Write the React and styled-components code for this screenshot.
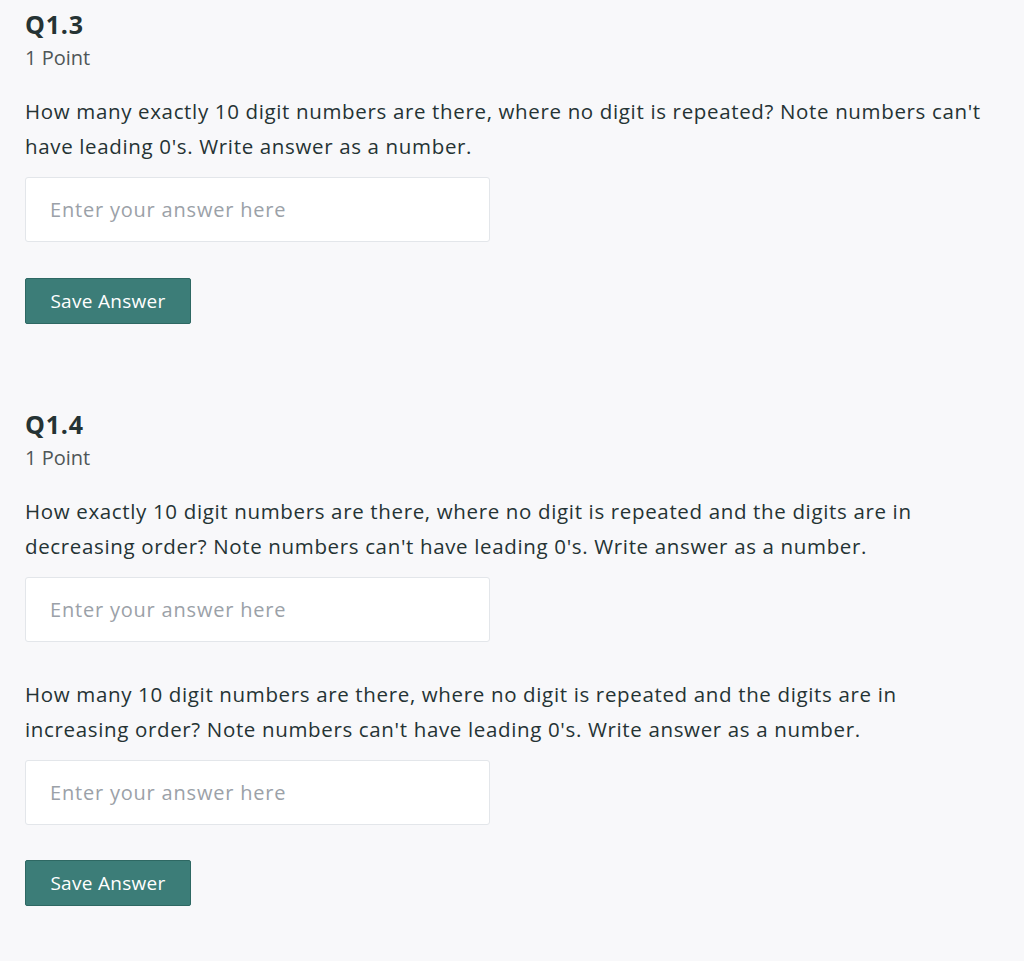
import React from "react";
import styled, { createGlobalStyle } from "styled-components";

const Global = createGlobalStyle`
  html, body { margin: 0; padding: 0; background: #f8f8fa; }
  body { font-family: "Open Sans", "Noto Sans", sans-serif; color: #253334; }
`;

const Page = styled.main`
  padding: 7px 25px 40px 25px;
  display: flex;
  flex-direction: column;
`;

const Question = styled.section`
  display: flex;
  flex-direction: column;
  margin-bottom: ${(p) => p.$gap || 0}px;
`;

const Title = styled.h2`
  margin: 0;
  font-size: 25px;
  font-weight: 700;
  line-height: 34px;
  letter-spacing: 0.8px;
  color: #253334;
`;

const Points = styled.div`
  font-size: 20px;
  line-height: 34px;
  color: #4f5657;
  margin-bottom: 19px;
`;

const Prompt = styled.p`
  margin: 0 0 13px 0;
  font-size: 20.5px;
  line-height: 35px;
  letter-spacing: 0.65px;
  max-width: 960px;
`;

const Input = styled.input`
  box-sizing: border-box;
  width: 465px;
  height: 65px;
  padding: 0 24px;
  border: 1px solid #e3e6ea;
  border-radius: 3px;
  background: #fff;
  font-family: inherit;
  font-size: 20px;
  letter-spacing: 0.8px;
  color: #253334;
  margin-bottom: ${(p) => p.$mb}px;
  &::placeholder { color: #9ba1a8; }
  &:focus { outline: none; }
`;

const Button = styled.button`
  align-self: flex-start;
  box-sizing: border-box;
  width: 166px;
  height: 46px;
  padding: 0;
  background: #3c7d78;
  border: 1px solid #2e6863;
  border-radius: 2px;
  color: #fff;
  font-family: inherit;
  font-size: 19px;
  letter-spacing: 0.3px;
  cursor: pointer;
`;

export default function App() {
  return (
    <>
      <Global />
      <Page>
        <Question $gap={83}>
          <Title>Q1.3</Title>
          <Points>1 Point</Points>
          <Prompt>
            How many exactly 10 digit numbers are there, where no digit is repeated? Note numbers can't
            have leading 0's. Write answer as a number.
          </Prompt>
          <Input placeholder="Enter your answer here" $mb={36} />
          <Button>Save Answer</Button>
        </Question>
        <Question>
          <Title>Q1.4</Title>
          <Points>1 Point</Points>
          <Prompt>
            How exactly 10 digit numbers are there, where no digit is repeated and the digits are in
            decreasing order? Note numbers can't have leading 0's. Write answer as a number.
          </Prompt>
          <Input placeholder="Enter your answer here" $mb={35} />
          <Prompt>
            How many 10 digit numbers are there, where no digit is repeated and the digits are in
            increasing order? Note numbers can't have leading 0's. Write answer as a number.
          </Prompt>
          <Input placeholder="Enter your answer here" $mb={35} />
          <Button>Save Answer</Button>
        </Question>
      </Page>
    </>
  );
}
